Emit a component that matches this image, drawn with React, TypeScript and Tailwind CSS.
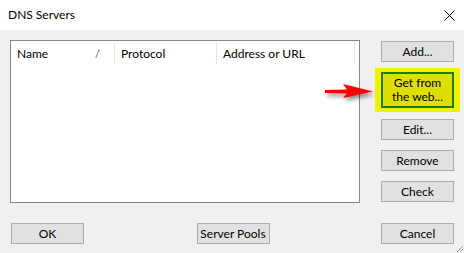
import React from 'react';

const font = { fontFamily: 'Lato, "Noto Sans", sans-serif' };

function Btn({ children, className = '' }: { children: React.ReactNode; className?: string }) {
  return (
    <div
      className={`h-[21px] w-[73px] border border-[#adadad] bg-[#e1e1e1] flex items-center justify-center text-[12px] text-black leading-none ${className}`}
    >
      {children}
    </div>
  );
}

const columns = [
  { label: 'Name', w: 'w-[104px]', sort: true },
  { label: 'Protocol', w: 'w-[102px]' },
  { label: 'Address or URL', w: 'w-[138px]' },
];

export default function App() {
  return (
    <div className="relative w-[464px] h-[253px] flex flex-col bg-[#f0f0f0] overflow-hidden" style={font}>
      {/* title bar */}
      <div className="h-[30px] bg-white flex items-center justify-between pl-[8px] pr-[8px] shrink-0">
        <span className="text-[12px] text-black">DNS Servers</span>
        <svg width="11" height="11" viewBox="0 0 11 11" className="mr-[1px]">
          <path d="M0.5 0.5 L10.5 10.5 M10.5 0.5 L0.5 10.5" stroke="#000" strokeWidth="1" />
        </svg>
      </div>

      <div className="flex-1 flex flex-col px-[10px] pt-[10px]">
        <div className="flex">
          {/* list box */}
          <div className="w-[350px] h-[163px] border border-[#828790] bg-white">
            <div className="flex h-[25px] pt-[1px]">
              {columns.map((c) => (
                <div
                  key={c.label}
                  className={`${c.w} h-[23px] border-r border-[#e5e5e5] flex items-center pl-[6px] text-[12px] text-black relative`}
                >
                  {c.label}
                  {c.sort && (
                    <span className="absolute right-[14px] top-[4px] text-[11px] text-[#555]">/</span>
                  )}
                </div>
              ))}
            </div>
          </div>

          {/* right buttons */}
          <div className="ml-[21px] w-[73px] flex flex-col pt-[1px]">
            <Btn>Add...</Btn>
            <div className="mt-[6px] -mx-[6px] h-[44px] bg-[#f2f200] px-[6px] py-[4px]">
              <div className="h-[36px] border-2 border-[#1e7b1e] bg-[#dede00] flex flex-col items-center justify-center text-[12px] leading-[14px] text-black">
                <span>Get from</span>
                <span>the web...</span>
              </div>
            </div>
            <Btn className="mt-[7px]">Edit...</Btn>
            <Btn className="mt-[10px]">Remove</Btn>
            <Btn className="mt-[10px]">Check</Btn>
          </div>
        </div>

        <div className="mt-[20px] flex justify-between pl-[1px] pr-[0px]">
          <Btn>OK</Btn>
          <Btn className="ml-[1px]">Server Pools</Btn>
          <Btn>Cancel</Btn>
        </div>
      </div>

      {/* red arrow pointing to the highlighted button */}
      <svg
        className="absolute left-[322px] top-[80px]"
        width="56"
        height="24"
        viewBox="0 0 56 24"
        style={{ filter: 'drop-shadow(2px 3px 2px rgba(0,0,0,0.45))' }}
      >
        <path d="M3 10 L25 9.5 L21 4 L51 11.5 L21 18 L25 13.5 L3 13 Z" fill="#ff0000" />
      </svg>

      {/* resize grip */}
      <svg className="absolute right-0 bottom-0" width="10" height="10" viewBox="0 0 10 10">
        <path d="M9 3 L3 9 M9 6 L6 9" stroke="#a0a0a0" strokeWidth="1" />
      </svg>
    </div>
  );
}
